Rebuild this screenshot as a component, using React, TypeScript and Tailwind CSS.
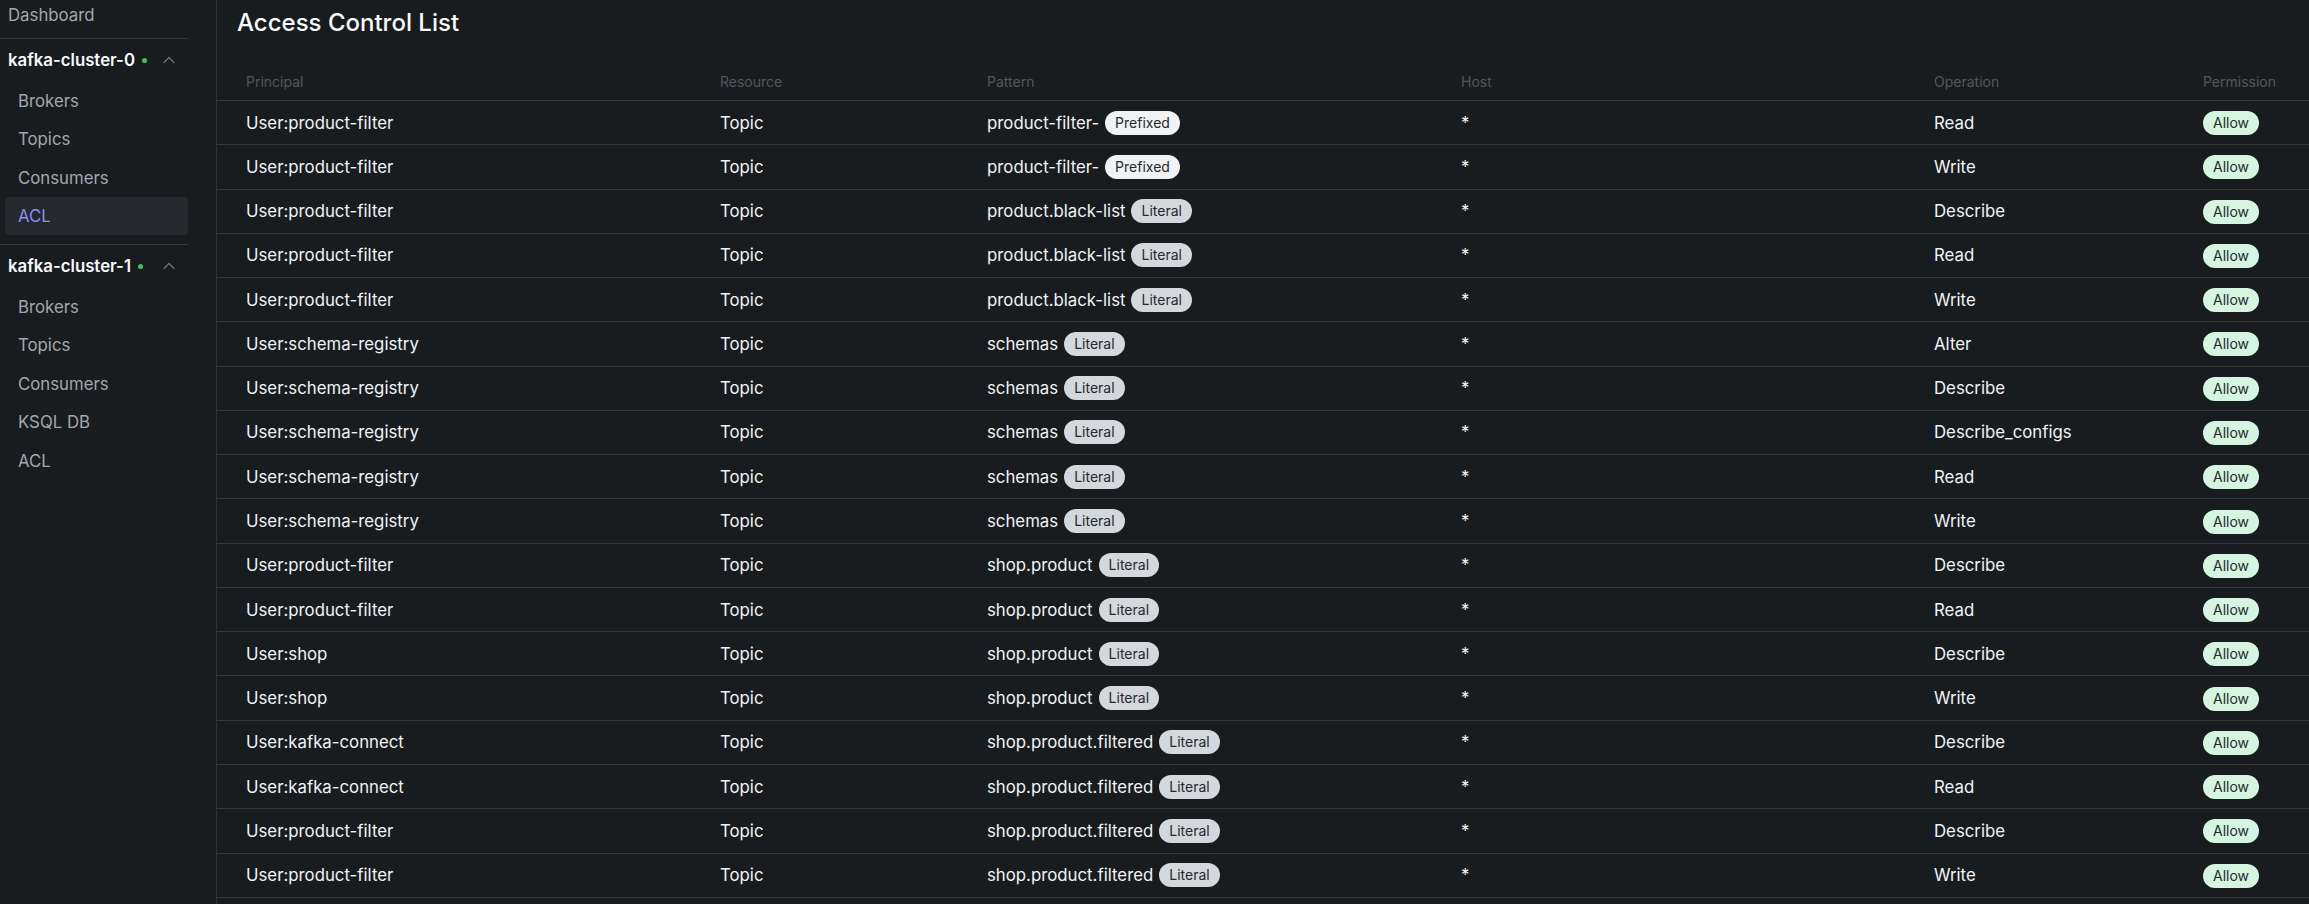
import React from "react";
import { ChevronUp } from "lucide-react";

type Acl = {
  principal: string;
  pattern: string;
  patternType: "Prefixed" | "Literal";
  operation: string;
};

const rows: Acl[] = [
  { principal: "User:product-filter", pattern: "product-filter-", patternType: "Prefixed", operation: "Read" },
  { principal: "User:product-filter", pattern: "product-filter-", patternType: "Prefixed", operation: "Write" },
  { principal: "User:product-filter", pattern: "product.black-list", patternType: "Literal", operation: "Describe" },
  { principal: "User:product-filter", pattern: "product.black-list", patternType: "Literal", operation: "Read" },
  { principal: "User:product-filter", pattern: "product.black-list", patternType: "Literal", operation: "Write" },
  { principal: "User:schema-registry", pattern: "schemas", patternType: "Literal", operation: "Alter" },
  { principal: "User:schema-registry", pattern: "schemas", patternType: "Literal", operation: "Describe" },
  { principal: "User:schema-registry", pattern: "schemas", patternType: "Literal", operation: "Describe_configs" },
  { principal: "User:schema-registry", pattern: "schemas", patternType: "Literal", operation: "Read" },
  { principal: "User:schema-registry", pattern: "schemas", patternType: "Literal", operation: "Write" },
  { principal: "User:product-filter", pattern: "shop.product", patternType: "Literal", operation: "Describe" },
  { principal: "User:product-filter", pattern: "shop.product", patternType: "Literal", operation: "Read" },
  { principal: "User:shop", pattern: "shop.product", patternType: "Literal", operation: "Describe" },
  { principal: "User:shop", pattern: "shop.product", patternType: "Literal", operation: "Write" },
  { principal: "User:kafka-connect", pattern: "shop.product.filtered", patternType: "Literal", operation: "Describe" },
  { principal: "User:kafka-connect", pattern: "shop.product.filtered", patternType: "Literal", operation: "Read" },
  { principal: "User:product-filter", pattern: "shop.product.filtered", patternType: "Literal", operation: "Describe" },
  { principal: "User:product-filter", pattern: "shop.product.filtered", patternType: "Literal", operation: "Write" },
];

const clusters = [
  { name: "kafka-cluster-0", items: ["Brokers", "Topics", "Consumers", "ACL"], active: "ACL" },
  { name: "kafka-cluster-1", items: ["Brokers", "Topics", "Consumers", "KSQL DB", "ACL"], active: "" },
];

const gridCols = "grid grid-cols-[474px_267px_474px_473px_269px_1fr]";

const Sidebar: React.FC = () => (
  <aside className="w-[217px] h-full shrink-0 border-r border-[#2e3135]">
    <nav className="w-[188px]">
      <div className="h-[39px] pt-[3px] pl-2 leading-6 text-[#a3a7ac] border-b border-[#33363b]">
        Dashboard
      </div>

      {clusters.map((cluster, ci) => (
        <div
          key={cluster.name}
          className={ci === 0 ? "pb-[9px] border-b border-[#33363b]" : ""}
        >
          {/* Cluster header */}
          <div className="h-[42px] flex items-center pl-2 pr-[9px]">
            <span className="font-semibold text-[#f8f9fa] leading-6">{cluster.name}</span>
            <span className="ml-[7px] w-[5px] h-[5px] rounded-full bg-[#40c057]" />
            <ChevronUp className="ml-auto text-[#6f747a]" size={20} strokeWidth={1.5} />
          </div>

          {cluster.items.map((item) => (
            <div
              key={item}
              className={
                item === cluster.active
                  ? "ml-[5px] h-[38.5px] pl-[13px] pt-[2px] flex items-center rounded-sm bg-[#25282c] text-[#8f8df5]"
                  : "ml-[5px] h-[38.5px] pl-[13px] pt-[2px] flex items-center text-[#a3a7ac]"
              }
            >
              {item}
            </div>
          ))}
        </div>
      ))}
    </nav>
  </aside>
);

const Badge: React.FC<{ label: string; className: string }> = ({ label, className }) => (
  <span className={`inline-flex items-center h-6 px-2.5 rounded-full text-sm leading-5 text-[#25292d] ${className}`}>
    {label}
  </span>
);

const App: React.FC = () => {
  return (
    <div className="flex h-screen w-full overflow-hidden bg-[#191c1f] font-['Inter',sans-serif] text-[16.8px]">
      <Sidebar />

      <main className="flex-1 min-w-0">
        <h1 className="pl-5 pt-[7px] text-2xl leading-8 font-medium text-[#f8f9fa]">
          Access Control List
        </h1>

        {/* Table header */}
        <div className={`${gridCols} h-[62px] items-end pb-2 border-b border-[#33363b] text-sm leading-5 text-[#51565c]`}>
          <div className="pl-[29px]">Principal</div>
          <div className="pl-[29px]">Resource</div>
          <div className="pl-[29px]">Pattern</div>
          <div className="pl-[29px]">Host</div>
          <div className="pl-[29px]">Operation</div>
          <div className="pl-[29px]">Permission</div>
        </div>

        {/* Table rows */}
        {rows.map((row, i) => (
          <div
            key={i}
            className={`${gridCols} h-[44.27px] items-center border-b border-[#33363b] text-[#f1f3f5] leading-6`}
          >
            <div className="pl-[29px]">{row.principal}</div>
            <div className="pl-[29px]">Topic</div>
            <div className="pl-[29px] flex items-center gap-1.5">
              <span>{row.pattern}</span>
              <Badge
                label={row.patternType}
                className={row.patternType === "Prefixed" ? "bg-[#f0f2f4]" : "bg-[#d4d8dc]"}
              />
            </div>
            <div className="pl-[29px]">*</div>
            <div className="pl-[29px]">{row.operation}</div>
            <div className="pl-[29px]">
              <Badge label="Allow" className="bg-[#d5f5e1]" />
            </div>
          </div>
        ))}
      </main>
    </div>
  );
};

export default App;
